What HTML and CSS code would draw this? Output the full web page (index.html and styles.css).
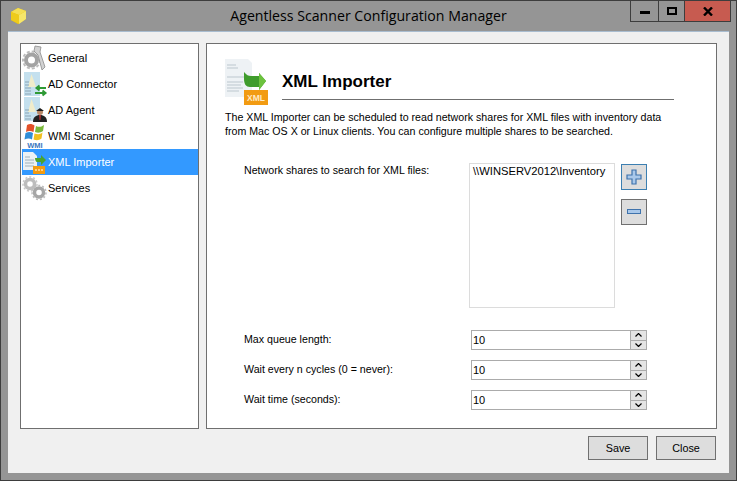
FILE: index.html
```html
<!DOCTYPE html>
<html lang="en">
<head>
<meta charset="utf-8">
<title>Agentless Scanner Configuration Manager</title>
<link rel="stylesheet" href="styles.css">
</head>
<body>
<div class="window">
  <header class="titlebar">
    <svg class="app-icon" width="18" height="18" viewBox="0 0 18 18">
      <path d="M9 1 L17 4 V12 L9 17 L2 13 V5 Z" fill="#e8c200"/>
      <path d="M9 1 L17 4 L10 8 L2 5 Z" fill="#f4de55"/>
      <path d="M10 8 L17 4 V12 L10 17 Z" fill="#f6e66a"/>
      <path d="M2 5 L10 8 V17 L2 13 Z" fill="#eecb1c"/>
    </svg>
    <div class="title">Agentless Scanner Configuration Manager</div>
    <div class="controls">
      <div class="ctl ctl-min"><span class="glyph-min"></span></div>
      <div class="ctl ctl-max"><span class="glyph-max"></span></div>
      <div class="ctl ctl-close">
        <svg width="10" height="9" viewBox="0 0 10 9"><path d="M1 0.500 L9 8.500 M9 0.500 L1 8.500" stroke="#000" stroke-width="2.400" fill="none"/></svg>
      </div>
    </div>
  </header>
  <div class="client">
    <div class="main">
      <nav class="nav">
        <div class="nav-item">
          <svg class="nav-icon" viewBox="0 0 26 26">
            <circle cx="9.500" cy="15" r="5.500" fill="none" stroke="#a3a3a3" stroke-width="4"/>
            <circle cx="9.500" cy="15" r="8.500" fill="none" stroke="#bcbcbc" stroke-width="2" stroke-dasharray="3 2"/>
            <path d="M13 1 L19 2 L18 7 L23 22 L20 25 L16 10 L12 6 Z" fill="#d2d2d2" stroke="#8a8a8a" stroke-width="0.800"/>
          </svg>
          <span>General</span>
        </div>
        <div class="nav-item">
          <svg class="nav-icon" viewBox="0 0 26 26">
            <rect x="2" y="1" width="16" height="24" fill="#c4e0ee"/>
            <path d="M9.500 3 L14 16 H6 Z" fill="#f0eccb"/>
            <path d="M3 11 H7 M3 14 H7 M3 17 H9 M3 20 H9 M3 23 H9" stroke="#8aa4b4" stroke-width="1"/>
            <path d="M24 17 H15 M17.500 14.500 L14.500 17 L17.500 19.500" stroke="#2f9a35" stroke-width="2" fill="none"/>
            <path d="M13 22 H23 M20.500 19.500 L23.500 22 L20.500 24.500" stroke="#2f9a35" stroke-width="2" fill="none"/>
          </svg>
          <span>AD Connector</span>
        </div>
        <div class="nav-item">
          <svg class="nav-icon" viewBox="0 0 26 26">
            <rect x="2" y="0" width="16" height="24" fill="#c4e0ee"/>
            <path d="M9.500 2 L14 15 H6 Z" fill="#f0eccb"/>
            <path d="M3 13 H7 M3 16 H7 M3 19 H9 M3 22 H9" stroke="#8aa4b4" stroke-width="1"/>
            <circle cx="18" cy="15" r="3" fill="#b98a6a"/>
            <path d="M14 14 L18 11 L22 14 Z" fill="#1e1e1e"/>
            <path d="M11 25 C11 20 14 18 18 18 C22 18 25 20 25 25 Z" fill="#222"/>
            <path d="M17 18 H19 L18.500 23 H17.500 Z" fill="#b03030"/>
          </svg>
          <span>AD Agent</span>
        </div>
        <div class="nav-item">
          <svg class="nav-icon" viewBox="0 0 26 26">
            <path d="M5 2 C8 0.500 10 1 12.500 2.500 L11.500 9 C9 8 7 7.500 4 9 Z" fill="#e2512a"/>
            <path d="M14 3 C17 4.500 19 4 22 2 L21 8 C18 10 16 10 13 9 Z" fill="#7ab93a"/>
            <path d="M3.500 10 C7 8.500 9 9 11 10 L10 16.500 C8 15.500 6 15 2.500 16.500 Z" fill="#2f8ed8"/>
            <path d="M12.500 10.500 C16 11.500 18 11.500 20.500 9.500 L19.500 15.500 C17 17.500 14.500 17.500 11.500 16.500 Z" fill="#f0c020"/>
            <text x="13" y="24.500" class="wmi">WMI</text>
          </svg>
          <span>WMI Scanner</span>
        </div>
        <div class="nav-item is-active">
          <svg class="nav-icon" viewBox="0 0 26 26">
            <path d="M1 3 H11 L15 7 V21 H1 Z" fill="#ecf1f4"/>
            <path d="M3 8 H8 M3 11 H12 M3 14 H12 M3 17 H12" stroke="#9fb0ba" stroke-width="1"/>
            <path d="M13 9 H19 V6 L24 11 L19 16 V13 H15 C14 13 13 11 13 9 Z" fill="#4aa32f"/>
            <rect x="11" y="17" width="12" height="8" fill="#f29b12"/>
            <path d="M13 21 H21" stroke="#ffe2b0" stroke-width="1.500" stroke-dasharray="2 1"/>
          </svg>
          <span>XML Importer</span>
        </div>
        <div class="nav-item">
          <svg class="nav-icon" viewBox="0 0 26 26">
            <circle cx="8" cy="9" r="4.500" fill="none" stroke="#bdbdbd" stroke-width="3.500"/>
            <circle cx="8" cy="9" r="7" fill="none" stroke="#c9c9c9" stroke-width="1.500" stroke-dasharray="2 2"/>
            <circle cx="17" cy="17.500" r="4.500" fill="none" stroke="#a6a6a6" stroke-width="3.500"/>
            <circle cx="17" cy="17.500" r="7" fill="none" stroke="#bcbcbc" stroke-width="1.500" stroke-dasharray="2 2"/>
          </svg>
          <span>Services</span>
        </div>
      </nav>
      <section class="panel">
        <div class="panel-head">
          <svg class="panel-icon" width="44" height="48" viewBox="0 0 44 48">
            <path d="M0 2 H23 L27 6 V40 H0 Z" fill="#eef2f5"/>
            <path d="M2 8 H11 M2 11 H13 M2 20 H22 M2 25 H18 M2 28 H16 M2 31 H18 M2 34 H14" stroke="#bcc7ce" stroke-width="1"/>
            <path d="M19 15 V22 C19 27 21 30 25 30 H34 V33 L41 24 L34 16 V19 H26 C23 19 22 18 19 15 Z" fill="#3f9c2c"/>
            <path d="M34 16 L41 24 L34 33 V24 Z" fill="#6cc23e"/>
            <rect x="19" y="33" width="24" height="15" fill="#f29b12"/>
            <text x="31" y="44" class="xml-badge">XML</text>
          </svg>
          <h1 class="heading">XML Importer</h1>
        </div>
        <p class="intro">The XML Importer can be scheduled to read network shares for XML files with inventory data<br>from Mac OS X or Linux clients. You can configure multiple shares to be searched.</p>
        <div class="shares">
          <label class="label">Network shares to search for XML files:</label>
          <div class="listbox">\\WINSERV2012\Inventory</div>
          <div class="share-btns">
            <button class="icon-btn is-focus" type="button">
              <svg width="18" height="18" viewBox="0 0 18 18"><path d="M7 2 H11 V7 H16 V11 H11 V16 H7 V11 H2 V7 H7 Z" fill="#a9c8ea" stroke="#3f73ac" stroke-width="1.200"/></svg>
            </button>
            <button class="icon-btn" type="button">
              <svg width="18" height="8" viewBox="0 0 18 8"><rect x="2.500" y="1.500" width="13" height="4" fill="#a9c8ea" stroke="#3f73ac"/></svg>
            </button>
          </div>
        </div>
        <div class="fields">
          <label class="label">Max queue length:</label>
          <div class="spin"><span class="spin-value">10</span><span class="spin-btns"><span class="arrow">
            <svg width="7" height="4" viewBox="0 0 7 4"><path d="M0.500 3.500 L3.500 0.500 L6.500 3.500" fill="none" stroke="#000" stroke-width="1.200"/></svg></span><span class="arrow">
            <svg width="7" height="4" viewBox="0 0 7 4"><path d="M0.500 0.500 L3.500 3.500 L6.500 0.500" fill="none" stroke="#000" stroke-width="1.200"/></svg></span></span></div>
          <label class="label">Wait every n cycles (0 = never):</label>
          <div class="spin"><span class="spin-value">10</span><span class="spin-btns"><span class="arrow">
            <svg width="7" height="4" viewBox="0 0 7 4"><path d="M0.500 3.500 L3.500 0.500 L6.500 3.500" fill="none" stroke="#000" stroke-width="1.200"/></svg></span><span class="arrow">
            <svg width="7" height="4" viewBox="0 0 7 4"><path d="M0.500 0.500 L3.500 3.500 L6.500 0.500" fill="none" stroke="#000" stroke-width="1.200"/></svg></span></span></div>
          <label class="label">Wait time (seconds):</label>
          <div class="spin"><span class="spin-value">10</span><span class="spin-btns"><span class="arrow">
            <svg width="7" height="4" viewBox="0 0 7 4"><path d="M0.500 3.500 L3.500 0.500 L6.500 3.500" fill="none" stroke="#000" stroke-width="1.200"/></svg></span><span class="arrow">
            <svg width="7" height="4" viewBox="0 0 7 4"><path d="M0.500 0.500 L3.500 3.500 L6.500 0.500" fill="none" stroke="#000" stroke-width="1.200"/></svg></span></span></div>
        </div>
      </section>
    </div>
    <footer class="footer">
      <button class="btn" type="button">Save</button>
      <button class="btn" type="button">Close</button>
    </footer>
  </div>
</div>
</body>
</html>
```
FILE: styles.css
```css
* { box-sizing: border-box; }
html, body { margin: 0; padding: 0; }
body {
  width: 737px;
  height: 481px;
  overflow: hidden;
  font-family: "Liberation Sans", Arial, sans-serif;
  font-size: 11px;
  color: #000;
}
.window {
  width: 737px;
  height: 481px;
  background: #959595;
  border: 1px solid #3d3d3d;
  padding: 0 7px 7px;
  display: flex;
  flex-direction: column;
}
.titlebar {
  height: 30px;
  flex: none;
  display: grid;
  grid-template-columns: 1fr auto 1fr;
  align-items: start;
}
.app-icon { margin: 6px 0 0 1px; }
.title {
  font-family: "Open Sans", sans-serif;
  font-size: 14.15px;
  line-height: 30px;
  color: #000;
}
.controls { justify-self: end; display: flex; height: 21px; margin-right: -2px; }
.ctl {
  height: 21px;
  border: 1px solid #3d3d3d;
  border-top: 0;
  display: flex;
  align-items: center;
  justify-content: center;
}
.ctl-min { width: 29px; }
.ctl-max { width: 26px; border-left: 0; }
.ctl-close { width: 46px; border-left: 0; background: #c75b50; }
.glyph-min { width: 10px; height: 3px; background: #000; margin-top: 3px; }
.glyph-max { width: 10px; height: 8px; border: 2px solid #000; }
.client {
  flex: 1;
  background: #f0f0f0;
  border-top: 1px solid #a9bdd0;
  padding: 11px 12px 12px;
  display: flex;
  flex-direction: column;
}
.main { display: flex; gap: 7px; height: 386px; }
.nav {
  width: 179px;
  background: #fff;
  border: 1px solid #6f6f6f;
  padding: 1px 0 1px 1px;
}
.nav-item {
  height: 26px;
  display: flex;
  align-items: center;
  padding-bottom: 1px;
}
.nav-icon { width: 26px; height: 26px; flex: none; }
.is-active { background: #3399ff; color: #fff; }
.wmi { font: bold 7.5px "Liberation Sans", sans-serif; fill: #3a78c0; text-anchor: middle; }
.panel {
  flex: 1;
  background: #fff;
  border: 1px solid #6f6f6f;
  padding: 13px 42px 0 18px;
  font-size: 10.65px;
}
.panel-head { display: flex; align-items: flex-start; height: 53px; }
.panel-icon { flex: none; }
.heading {
  flex: 1;
  margin: 0 0 0 13px;
  height: 43px;
  font-size: 17px;
  font-weight: bold;
  line-height: 26px;
  padding-top: 12px;
  border-bottom: 1px solid #6f6f6f;
}
.xml-badge { font: bold 8.5px "Liberation Sans", sans-serif; fill: #ffe9c4; text-anchor: middle; }
.intro { margin: 0 -4px 0 0; line-height: 14px; white-space: nowrap; }
.shares {
  display: grid;
  grid-template-columns: 225px 146px auto;
  margin: 25px 0 0 19px;
}
.label { line-height: 13px; padding-top: 1px; }
.listbox {
  height: 145px;
  border: 1px solid #dcdcdc;
  padding: 1px 0 0 3px;
  line-height: 13px;
  font-size: 11.2px;
}
.share-btns { display: flex; flex-direction: column; gap: 9px; margin: 1px 0 0 6px; }
.icon-btn {
  width: 26px;
  height: 26px;
  padding: 0;
  background: #dddddd;
  border: 1px solid #707070;
  display: flex;
  align-items: center;
  justify-content: center;
}
.is-focus { border-color: #3c7fb1; }
.fields {
  display: grid;
  grid-template-columns: 227px 176px;
  grid-auto-rows: 20px;
  row-gap: 10px;
  margin: 22px 0 0 19px;
}
.fields .label { padding-top: 3px; }
.spin {
  border: 1px solid #ababab;
  display: flex;
  justify-content: space-between;
}
.spin-value { line-height: 16px; padding: 1px 0 0 1px; font-size: 11px; }
.spin-btns {
  width: 17px;
  display: flex;
  flex-direction: column;
  gap: 1px;
  background: #ababab;
  padding: 1px;
  margin: -1px -1px -1px 0;
}
.arrow {
  flex: 1;
  background: #e4e4e4;
  display: flex;
  align-items: center;
  justify-content: center;
}
.footer { display: flex; justify-content: flex-end; gap: 8px; margin-top: 7px; padding-right: 1px; }
.btn {
  width: 60px;
  height: 24px;
  background: #dddddd;
  border: 1px solid #707070;
  font: 10.8px "Liberation Sans", sans-serif;
  color: #000;
  padding: 0;
}
```
